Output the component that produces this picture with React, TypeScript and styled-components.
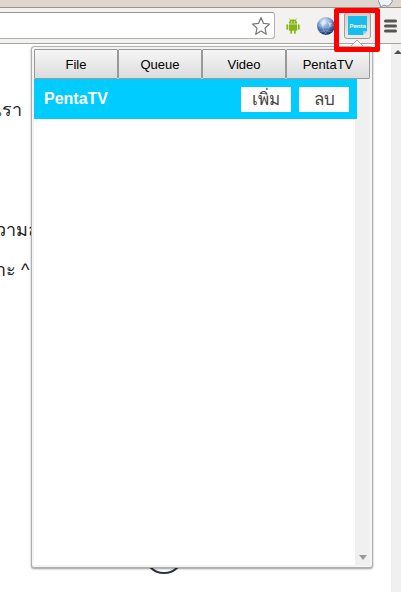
import React from "react";
import styled, { createGlobalStyle } from "styled-components";

const GlobalStyle = createGlobalStyle`
  * { box-sizing: border-box; }
  body { margin: 0; background: #fff; font-family: "Liberation Sans", Arial, sans-serif; }
  button { font-family: inherit; cursor: pointer; }
`;

const Browser = styled.div`
  position: relative;
  display: flex;
  flex-direction: column;
  min-height: 100vh;
  overflow: hidden;
`;

const TitleBar = styled.div`
  display: flex;
  justify-content: flex-end;
  height: 8px;
  padding-right: 5px;
  overflow: hidden;
  background: #dfd6d0;
  border-bottom: 1px solid #99948a;
`;

const Toolbar = styled.header`
  display: flex;
  align-items: center;
  height: 36px;
  background: #f3f2f1;
  border-bottom: 1px solid #a3a5a3;
`;

const AddressBar = styled.div`
  display: flex;
  flex: 1;
  height: 27px;
  background: #fff;
  border: 1px solid #b5b3b1;
  border-top-color: #949698;
  border-left: 0;
  border-radius: 0 3px 3px 0;
`;

const Address = styled.input`
  flex: 1;
  min-width: 0;
  border: 0;
  outline: 0;
  background: transparent;
`;

const IconButton = styled.button<{ $width: number; $align?: string }>`
  display: flex;
  align-items: center;
  justify-content: ${(p) => p.$align || "center"};
  flex: none;
  width: ${(p) => p.$width}px;
  height: 25px;
  padding: 0;
  border: 0;
  background: transparent;
`;

const ActiveButton = styled.button`
  display: flex;
  align-items: center;
  justify-content: center;
  flex: none;
  width: 27px;
  height: 27px;
  padding: 0;
  border: 1px solid #a39c96;
  border-radius: 3px;
  background: linear-gradient(#d4cdc8, #eee9e6);
`;

const Extensions = styled.div`
  display: flex;
  align-items: center;
  padding: 0 3px 0 2px;
`;

const Page = styled.div`
  display: flex;
  flex: 1;
`;

const Article = styled.main`
  flex: 1;
  min-width: 0;
  margin-left: -4px;
  padding-top: 46px;
  color: #222;
  font-size: 18px;
  line-height: 40px;
  white-space: nowrap;
`;

const Paragraph = styled.p`
  margin: 0 0 80px;
`;

const ScrollTrack = styled.div`
  width: 10px;
  padding: 5px 0 0 3px;
  background: #f0f0f0;
  overflow: hidden;
  svg { display: block; }
`;

const PageRing = styled.svg`
  position: absolute;
  left: 144px;
  bottom: 18px;
`;

const Popup = styled.section`
  position: absolute;
  top: 46px;
  bottom: 24px;
  left: 31px;
  right: 28px;
  display: flex;
  flex-direction: column;
  padding: 2px;
  background: #f4f4f4;
  border: 1px solid #b0b0b0;
  border-radius: 3px;
  box-shadow: 0 1px 2px rgba(0, 0, 0, 0.4);
`;

const Menu = styled.nav`
  display: flex;
  height: 30px;
  background: #fff;
`;

const MenuButton = styled.button`
  flex: 1;
  padding: 0;
  color: #000;
  font-size: 13px;
  border: 1px solid #999;
  border-radius: 1px;
  background: linear-gradient(#f6f6f6, #dcdcdc);
`;

const Content = styled.div`
  display: flex;
  flex: 1;
  background: #fff;
`;

const Queue = styled.div`
  position: relative;
  flex: 1;
  margin-right: -2px;
`;

const QueueRow = styled.div`
  display: flex;
  align-items: center;
  gap: 8px;
  height: 40px;
  padding: 0 8px 0 10px;
  background: #00ccff;
`;

const QueueTitle = styled.h1`
  flex: 1;
  margin: 0;
  color: #fff;
  font-size: 16px;
  line-height: 20px;
`;

const RowButton = styled.button`
  width: 50px;
  height: 25px;
  padding: 0;
  border: 0;
  background: #fff;
  color: #444;
  font-size: 17px;
  line-height: 25px;
`;

const PopupScroll = styled.div`
  display: flex;
  align-items: flex-end;
  justify-content: center;
  width: 15px;
  padding-bottom: 5px;
  background: #f0f0f0;
`;

const Highlight = styled.div`
  position: absolute;
  top: 8px;
  right: 21px;
  width: 46px;
  height: 44px;
  border: 5px solid #fe0000;
  border-radius: 2px;
  pointer-events: none;
`;

const Pointer = styled.svg`
  position: absolute;
  top: 39px;
  right: 37px;
`;

const PentaLogo = styled.svg`
  text {
    font: bold 6px "Liberation Sans", Arial, sans-serif;
    fill: #fff;
  }
`;

const menu = ["File", "Queue", "Video", "PentaTV"];
const actions = ["เพิ่ม", "ลบ"];

export default function App() {
  return (
    <Browser>
      <GlobalStyle />
      <TitleBar>
        <svg width="18" height="8" aria-hidden="true">
          <path d="M0 0 L3 7 L6 5 Q11 8 13 3 Q15 2 14 0" fill="#edf3f8" stroke="#8493a3" />
        </svg>
      </TitleBar>
      <Toolbar>
        <AddressBar>
          <Address aria-label="Address" />
          <IconButton $width={26} aria-label="Bookmark">
            <svg width="20" height="20" viewBox="0 0 20 20">
              <path d="M10 1.5 12.5 7.4 18.5 8 14 12.2 15.3 18.3 10 15.1 4.7 18.3 6 12.2 1.5 8 7.5 7.4Z" fill="#fff" stroke="#777" strokeWidth="1.2" strokeLinejoin="round" />
            </svg>
          </IconButton>
        </AddressBar>
        <Extensions>
          <IconButton $width={32} aria-label="Android">
            <svg width="14" height="16" viewBox="0 0 14 16">
              <g fill="#85b514" stroke="#85b514">
                <path d="M3.5 0.5 5 3M10.5 0.5 9 3" fill="none" strokeWidth="0.7" />
                <path d="M3 5.5a4 4 0 0 1 8 0Z" strokeWidth="0.3" />
                <path d="M3 6.5h8v6H3Z" strokeWidth="0.3" />
                <path d="M1.2 7v4M12.8 7v4M5.2 12v3M8.8 12v3" strokeWidth="1.7" strokeLinecap="round" />
              </g>
              <path d="M5 4h1M8 4h1" stroke="#fff" />
            </svg>
          </IconButton>
          <IconButton $width={35} aria-label="Web">
            <svg width="20" height="20" viewBox="0 0 20 20">
              <defs>
                <radialGradient id="globe" cx="0.4" cy="0.25" r="0.75">
                  <stop offset="0" stopColor="#e0edfa" />
                  <stop offset="0.5" stopColor="#6f96c9" />
                  <stop offset="1" stopColor="#102c6c" />
                </radialGradient>
              </defs>
              <circle cx="9" cy="10" r="9" fill="url(#globe)" />
              <path d="M1 9q8 5 16 0M3 4q6 3 12 0M9 1q-8 8 1 18M9 1q8 8-2 18M3 16q6-3 12 0" fill="none" stroke="#d5e7f7" strokeWidth="0.6" opacity="0.45" />
              <path d="M3 7l4-3 2 3-3 4ZM11 6l4 1-2 4Z" fill="#f2f7fa" opacity="0.6" />
            </svg>
          </IconButton>
          <ActiveButton aria-label="Penta">
            <PentaLogo width="19" height="19" viewBox="0 0 19 19">
              <path d="M0 0h19v15l-4 4H0Z" fill="#18bde9" />
              <path d="M19 15h-4v4Z" fill="#83d8ee" />
              <text x="1.5" y="11.5">Penta</text>
            </PentaLogo>
          </ActiveButton>
          <IconButton $width={27} $align="flex-end" aria-label="Chrome menu">
            <svg width="15" height="14" viewBox="0 0 15 14">
              <path d="M2.5 2h10M2.5 7h10M2.5 12h10" stroke="#555" strokeWidth="3" strokeLinecap="round" />
            </svg>
          </IconButton>
        </Extensions>
      </Toolbar>
      <Page>
        <Article>
          <Paragraph>เรา</Paragraph>
          <Paragraph>วามล<br />าะ ^</Paragraph>
        </Article>
        <ScrollTrack>
          <svg width="8" height="5"><path d="M0 5 4 1 8 5Z" fill="#505050" /></svg>
        </ScrollTrack>
      </Page>
      <PageRing width="40" height="40" viewBox="0 0 40 40" aria-hidden="true">
        <circle cx="20" cy="20" r="19" fill="none" stroke="#30343e" strokeWidth="2" />
      </PageRing>
      <Popup>
        <Menu>{menu.map((label) => <MenuButton key={label}>{label}</MenuButton>)}</Menu>
        <Content>
          <Queue>
            <QueueRow>
              <QueueTitle>PentaTV</QueueTitle>
              {actions.map((label) => <RowButton key={label}>{label}</RowButton>)}
            </QueueRow>
          </Queue>
          <PopupScroll>
            <svg width="8" height="5"><path d="M0 0h8L4 5Z" fill="#999" /></svg>
          </PopupScroll>
        </Content>
      </Popup>
      <Highlight />
      <Pointer width="14" height="7" viewBox="0 0 14 7" aria-hidden="true">
        <path d="M1 7 7 1 13 7" fill="#f6f6f6" stroke="#aaa" />
      </Pointer>
    </Browser>
  );
}
